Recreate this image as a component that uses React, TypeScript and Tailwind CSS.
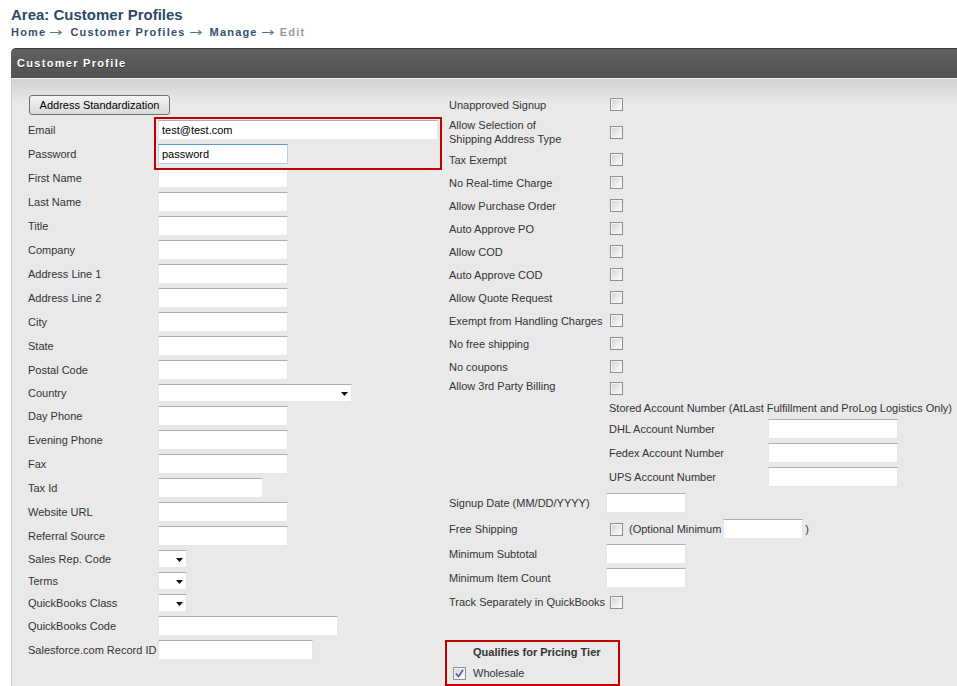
import React from 'react';

type LeftRow = { label: string; kind: 'input' | 'select'; w: string; value?: string; focus?: boolean };

const leftRows: LeftRow[] = [
  { label: 'Email', kind: 'input', w: 'w-[280px]', value: 'test@test.com' },
  { label: 'Password', kind: 'input', w: 'w-[130px]', value: 'password', focus: true },
  { label: 'First Name', kind: 'input', w: 'w-[130px]' },
  { label: 'Last Name', kind: 'input', w: 'w-[130px]' },
  { label: 'Title', kind: 'input', w: 'w-[130px]' },
  { label: 'Company', kind: 'input', w: 'w-[130px]' },
  { label: 'Address Line 1', kind: 'input', w: 'w-[130px]' },
  { label: 'Address Line 2', kind: 'input', w: 'w-[130px]' },
  { label: 'City', kind: 'input', w: 'w-[130px]' },
  { label: 'State', kind: 'input', w: 'w-[130px]' },
  { label: 'Postal Code', kind: 'input', w: 'w-[130px]' },
  { label: 'Country', kind: 'select', w: 'w-[194px]' },
  { label: 'Day Phone', kind: 'input', w: 'w-[130px]' },
  { label: 'Evening Phone', kind: 'input', w: 'w-[130px]' },
  { label: 'Fax', kind: 'input', w: 'w-[130px]' },
  { label: 'Tax Id', kind: 'input', w: 'w-[105px]' },
  { label: 'Website URL', kind: 'input', w: 'w-[130px]' },
  { label: 'Referral Source', kind: 'input', w: 'w-[130px]' },
  { label: 'Sales Rep. Code', kind: 'select', w: 'w-[29px]' },
  { label: 'Terms', kind: 'select', w: 'w-[29px]' },
  { label: 'QuickBooks Class', kind: 'select', w: 'w-[29px]' },
  { label: 'QuickBooks Code', kind: 'input', w: 'w-[180px]' },
  { label: 'Salesforce.com Record ID', kind: 'input', w: 'w-[155px]' },
];

const checkRows = [
  'Tax Exempt',
  'No Real-time Charge',
  'Allow Purchase Order',
  'Auto Approve PO',
  'Allow COD',
  'Auto Approve COD',
  'Allow Quote Request',
  'Exempt from Handling Charges',
  'No free shipping',
  'No coupons',
];

const Checkbox = ({ checked }: { checked?: boolean }) => (
  <div className="h-[13px] w-[13px] shrink-0 border border-[#8e8f8f] bg-[#f4f4f4] p-px">
    <div className="flex h-full w-full items-center justify-center bg-linear-to-br from-[#d6d6d6] to-[#fbfbfb]">
      {checked && (
        <svg width="9" height="9" viewBox="0 0 9 9">
          <path d="M1 4.5 L3.5 7.5 L8 1" fill="none" stroke="#4a5a94" strokeWidth="1.6" />
        </svg>
      )}
    </div>
  </div>
);

const TextBox = ({ w, value, focus }: { w: string; value?: string; focus?: boolean }) => (
  <input
    readOnly
    value={value ?? ''}
    className={
      'h-[20px] border bg-white px-[3px] text-[11px] text-black outline-none ' +
      w +
      (focus ? ' border-[#b5d0ea] border-t-[#5d98c8]' : ' border-[#e3e6ec] border-t-[#abadb3]')
    }
  />
);

const SelectBox = ({ w }: { w: string }) => (
  <div className={'flex h-[18px] items-center justify-end border border-[#e3e6ec] border-t-[#abadb3] bg-white pr-[3px] ' + w}>
    <svg width="7" height="4" viewBox="0 0 7 4" className="mt-[2px]">
      <path d="M0 0 H7 L3.5 4 Z" fill="#111" />
    </svg>
  </div>
);

const Arrow = ({ right }: { right: string }) => (
  <span
    className={
      "ml-[3px] inline-block w-[13px] scale-x-[1.35] text-center font-['DejaVu_Sans',sans-serif] text-[12px] font-normal leading-[14px] tracking-normal text-[#5b7490] " +
      right
    }
  >
    →
  </span>
);

const App: React.FC = () => {
  return (
    <div className="relative h-[686px] w-[957px] overflow-hidden bg-white font-['Liberation_Sans',Arial,sans-serif] text-[11px] text-[#333]">
      <div className="px-[11px] pt-[6px]">
        <h1 className="text-[15px] font-bold leading-[17px] text-[#2c4a68]">Area: Customer Profiles</h1>
        <div className="mt-[2px] h-[14px] whitespace-nowrap text-[11px] font-bold leading-[14px] tracking-[1.2px] text-[#34506e]">
          Home
          <Arrow right="mr-[8px]" />
          Customer Profiles
          <Arrow right="mr-[8px]" />
          Manage
          <Arrow right="mr-[6px]" />
          <span className="text-[#9a9a9a]">Edit</span>
        </div>
      </div>

      <div className="ml-[11px] mt-[9px]">
        <div className="flex h-[30px] items-center rounded-tl-[5px] border-t border-[#3a3a3a] bg-linear-to-b from-[#606060] to-[#525252] pl-[6px] text-[11px] font-bold tracking-[1.3px] text-white [text-shadow:0_1px_0_#333]">
          Customer Profile
        </div>
        <div className="flex h-[620px] border-l border-t border-[#cfcfcf] border-t-[#f0f0f0] bg-[linear-gradient(to_bottom,#d2d2d2_0px,#e9e9e9_24px)] pl-[16px] pt-[14px]">
          {/* left column */}
          <div className="w-[421px] shrink-0">
            <div className="mb-[3px] ml-px mt-[2px] flex">
              <button className="h-[20px] w-[141px] rounded-[3px] border border-[#707070] bg-linear-to-b from-[#f4f4f4] to-[#dadada] text-[11px] text-black">
                Address Standardization
              </button>
            </div>
            {leftRows.map((r) => (
              <div key={r.label} className={'flex items-center ' + (r.kind === 'input' ? 'h-[24px]' : 'h-[22px]')}>
                <div className="w-[130px] shrink-0 whitespace-nowrap">{r.label}</div>
                {r.kind === 'input' ? <TextBox w={r.w} value={r.value} focus={r.focus} /> : <SelectBox w={r.w} />}
              </div>
            ))}
          </div>

          {/* right column */}
          <div className="flex-1 whitespace-nowrap leading-[14px]">
            <div className="flex h-[23px] items-center">
              <div className="w-[157px] shrink-0">Unapproved Signup</div>
              <div className="ml-[4px]">
                <Checkbox />
              </div>
            </div>
            <div className="flex h-[32px] items-center">
              <div className="w-[157px] shrink-0">
                Allow Selection of
                <br />
                Shipping Address Type
              </div>
              <div className="ml-[4px]">
                <Checkbox />
              </div>
            </div>
            {checkRows.map((c) => (
              <div key={c} className="flex h-[23px] items-center">
                <div className="w-[157px] shrink-0">{c}</div>
                <div className="ml-[4px]">
                  <Checkbox />
                </div>
              </div>
            ))}
            <div className="flex">
              <div className="w-[157px] shrink-0 pt-px">Allow 3rd Party Billing</div>
              <div>
                <div className="ml-[4px] mt-[4px]">
                  <Checkbox />
                </div>
                <div className="mt-[6px] pl-[3px]">Stored Account Number (AtLast Fulfillment and ProLog Logistics Only)</div>
                <div className="mt-[2px]">
                  {['DHL Account Number', 'Fedex Account Number', 'UPS Account Number'].map((a) => (
                    <div key={a} className="flex h-[24px] items-center">
                      <div className="w-[162px] shrink-0 pl-[3px]">{a}</div>
                      <TextBox w="w-[130px]" />
                    </div>
                  ))}
                </div>
              </div>
            </div>
            <div className="flex h-[28px] items-center">
              <div className="w-[157px] shrink-0">Signup Date (MM/DD/YYYY)</div>
              <TextBox w="w-[80px]" />
            </div>
            <div className="flex h-[24px] items-center">
              <div className="w-[157px] shrink-0">Free Shipping</div>
              <div className="ml-[4px]">
                <Checkbox />
              </div>
              <span className="ml-[6px]">(Optional Minimum</span>
              <div className="ml-[2px]">
                <TextBox w="w-[80px]" />
              </div>
              <span className="ml-[2px]">)</span>
            </div>
            <div className="flex h-[25px] items-center">
              <div className="w-[157px] shrink-0">Minimum Subtotal</div>
              <TextBox w="w-[80px]" />
            </div>
            <div className="flex h-[24px] items-center">
              <div className="w-[157px] shrink-0">Minimum Item Count</div>
              <TextBox w="w-[80px]" />
            </div>
            <div className="flex h-[24px] items-center">
              <div className="w-[157px] shrink-0">Track Separately in QuickBooks</div>
              <div className="ml-[4px]">
                <Checkbox />
              </div>
            </div>

            <div className="ml-[-4px] mt-[26px] h-[46px] w-[175px] border-2 border-[#c00000]">
              <div className="pl-[26px] pt-[3px] font-bold">Qualifies for Pricing Tier</div>
              <div className="mt-[7px] flex items-center">
                <div className="ml-[6px]">
                  <Checkbox checked />
                </div>
                <span className="ml-[7px]">Wholesale</span>
              </div>
            </div>
          </div>
        </div>
      </div>

      {/* highlight box around login fields */}
      <div className="pointer-events-none absolute left-[154px] top-[117px] h-[53px] w-[288px] border-2 border-[#c00000]" />
    </div>
  );
};

export default App;
